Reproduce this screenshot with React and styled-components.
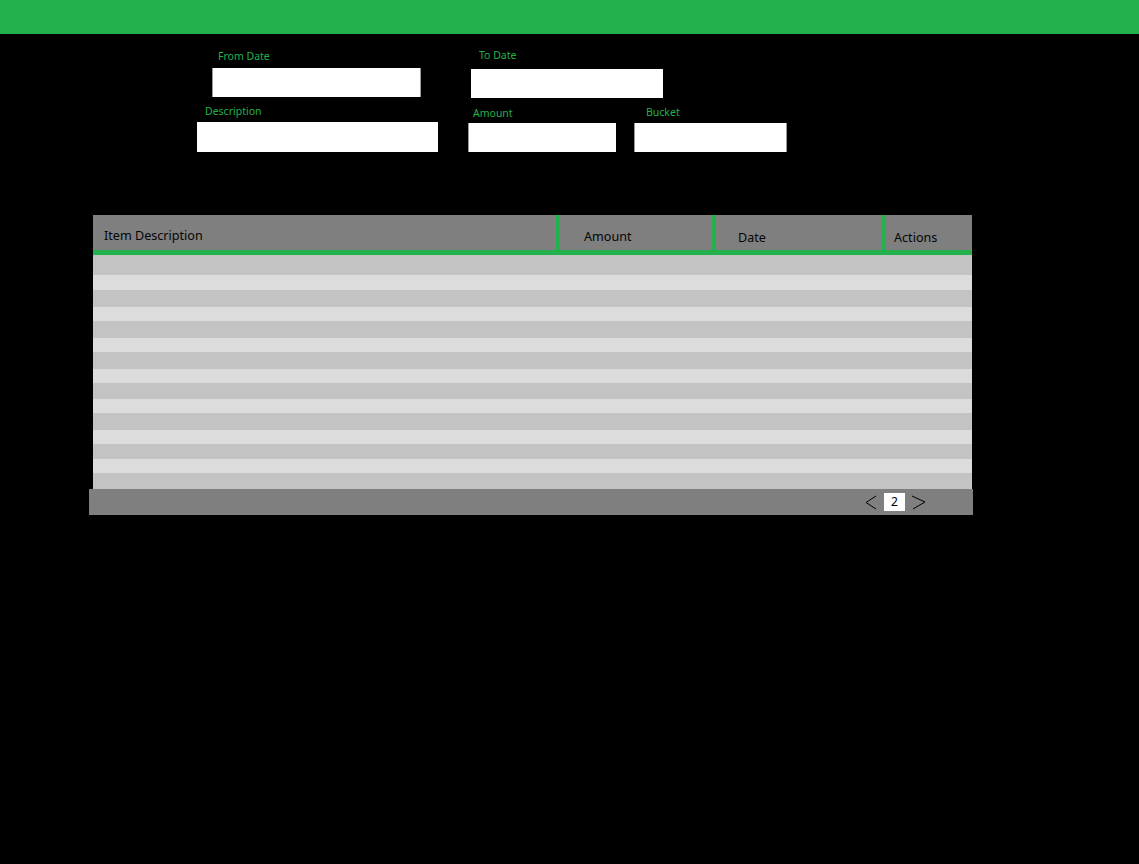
import styled, { createGlobalStyle } from 'styled-components';

const GlobalStyle = createGlobalStyle`
  html, body {
    margin: 0;
    padding: 0;
    background: #000;
  }
  body {
    font-family: 'Noto Sans', 'Open Sans', sans-serif;
  }
`;

const GREEN = '#22b14c';
const GREY = '#7f7f7f';

const rowHeights = [20, 15, 17, 14, 17, 14, 17, 14, 16, 14, 17, 14, 15, 14, 16];

const columns = [
  { title: 'Item Description', width: 463, pad: 11, top: 12 },
  { title: 'Amount', width: 152, pad: 24, top: 13 },
  { title: 'Date', width: 166, pad: 22, top: 14 },
  { title: 'Actions', width: 86, pad: 8, top: 14 },
];

const Page = styled.div`
  min-height: 864px;
  background: #000;
`;

const TopBar = styled.div`
  height: 34px;
  background: ${GREEN};
`;

const Filters = styled.div`
  display: flex;
  flex-direction: column;
  padding-top: 13px;
`;

const FieldRow = styled.div`
  display: flex;
  align-items: flex-start;
  padding-left: ${(p) => p.$indent}px;
  margin-top: ${(p) => p.$top || 0}px;
`;

const Field = styled.div`
  display: flex;
  flex-direction: column;
  margin-left: ${(p) => p.$shift || 0}px;
  margin-top: ${(p) => p.$drop || 0}px;
`;

const Label = styled.label`
  font-size: 10.5px;
  line-height: 14px;
  color: ${GREEN};
  padding-left: ${(p) => p.$inset}px;
  margin-bottom: ${(p) => p.$gap}px;
`;

const Input = styled.input`
  box-sizing: border-box;
  width: ${(p) => p.$w}px;
  height: ${(p) => p.$h}px;
  background: #fff;
  border: none;
  border-left: 1px solid ${(p) => (p.$edgeL ? '#9a9a9a' : '#fff')};
  border-right: 1px solid ${(p) => (p.$edgeR ? '#9a9a9a' : '#fff')};
  outline: none;
  padding: 0 6px;
  font: inherit;
`;

const TableWrap = styled.div`
  margin: 63px 0 0 89px;
  width: 884px;
`;

const Head = styled.div`
  display: flex;
  margin-left: 4px;
  width: 879px;
  height: 35px;
  background: ${GREEN};
  gap: 4px;
  border-bottom: 5px solid ${GREEN};
`;

const HeadCell = styled.div`
  box-sizing: border-box;
  width: ${(p) => p.$w}px;
  padding: ${(p) => p.$top}px 0 0 ${(p) => p.$pad}px;
  background: ${GREY};
  color: #050505;
  font-size: 12.6px;
  line-height: 18px;
`;

const Body = styled.div`
  display: flex;
  flex-direction: column;
  margin-left: 4px;
  width: 879px;
`;

const Stripe = styled.div`
  height: ${(p) => p.$h}px;
  background: ${(p) => (p.$odd ? '#dcdcdc' : '#c3c3c3')};
`;

const Footer = styled.div`
  display: flex;
  justify-content: flex-end;
  align-items: center;
  height: 26px;
  background: ${GREY};
  padding-right: 47px;
  gap: 6px;
`;

const PageBox = styled.div`
  width: 21px;
  height: 18px;
  background: #fff;
  color: #000;
  font-size: 12px;
  line-height: 18px;
  text-align: center;
`;

const Arrow = ({ dir }) => (
  <svg width="15" height="15" viewBox="0 0 15 15">
    {dir === 'left' ? (
      <polyline points="13,1 3,7.5 13,14" fill="none" stroke="#000" strokeWidth="1" />
    ) : (
      <polyline points="1,1 14,7 2,14" fill="none" stroke="#000" strokeWidth="1" />
    )}
  </svg>
);

const App = () => {
  return (
    <Page>
      <GlobalStyle />
      <TopBar />
      <Filters>
        <FieldRow $indent={212}>
          <Field $drop={2}>
            <Label $inset={6} $gap={5}>From Date</Label>
            <Input $w={209} $h={29} $edgeL $edgeR />
          </Field>
          <Field $shift={50} $drop={1}>
            <Label $inset={8} $gap={7}>To Date</Label>
            <Input $w={192} $h={29} />
          </Field>
        </FieldRow>
        <FieldRow $indent={197} $top={6}>
          <Field>
            <Label $inset={8} $gap={4}>Description</Label>
            <Input $w={241} $h={30} />
          </Field>
          <Field $shift={30} $drop={2}>
            <Label $inset={5} $gap={3}>Amount</Label>
            <Input $w={148} $h={29} $edgeL />
          </Field>
          <Field $shift={18} $drop={1}>
            <Label $inset={12} $gap={4}>Bucket</Label>
            <Input $w={153} $h={29} $edgeL $edgeR />
          </Field>
        </FieldRow>
      </Filters>

      <TableWrap>
        <Head>
          {columns.map((col) => (
            <HeadCell key={col.title} $w={col.width} $pad={col.pad} $top={col.top}>
              {col.title}
            </HeadCell>
          ))}
        </Head>
        <Body>
          {rowHeights.map((h, i) => (
            <Stripe key={i} $h={h} $odd={i % 2 === 1} />
          ))}
        </Body>
        <Footer>
          <Arrow dir="left" />
          <PageBox>2</PageBox>
          <Arrow dir="right" />
        </Footer>
      </TableWrap>
    </Page>
  );
};

export default App;
